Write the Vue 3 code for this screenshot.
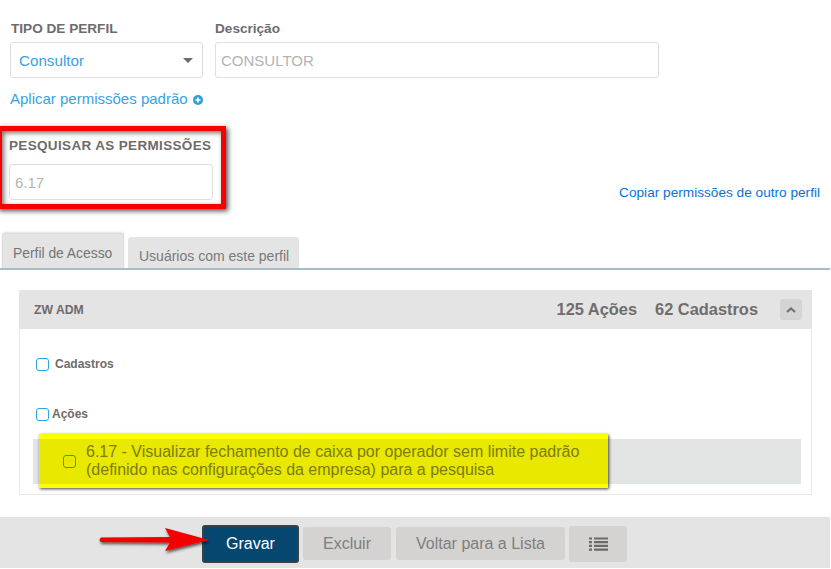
<script setup>
const footerButtons = ['Excluir', 'Voltar para a Lista']
</script>

<template>
  <div class="page">
    <section class="fields">
      <div class="field type">
        <label class="label">TIPO DE PERFIL</label>
        <div class="box select">
          <span>Consultor</span>
          <i class="caret"></i>
        </div>
      </div>
      <div class="field desc">
        <label class="label">Descrição</label>
        <div class="box placeholder">CONSULTOR</div>
      </div>
    </section>

    <a class="apply">Aplicar permissões padrão
      <svg class="plus" viewBox="0 0 10 10" width="10" height="10">
        <circle cx="5" cy="5" r="5" fill="#2f9fdc" />
        <path d="M5 2.4v5.2M2.4 5h5.2" stroke="#fff" stroke-width="1.7" />
      </svg>
    </a>

    <section class="search-row">
      <div class="search">
        <label class="label spaced">PESQUISAR AS PERMISSÕES</label>
        <div class="box placeholder small">6.17</div>
        <div class="red-mark"></div>
      </div>
      <a class="copy">Copiar permissões de outro perfil</a>
    </section>

    <nav class="tabs">
      <div class="tab active">Perfil de Acesso</div>
      <div class="tab">Usuários com este perfil</div>
    </nav>

    <section class="panel">
      <header class="panel-head">
        <span class="panel-title">ZW ADM</span>
        <span class="count first">125 Ações</span>
        <span class="count">62 Cadastros</span>
        <span class="collapse">
          <svg viewBox="0 0 10 6" width="10" height="6">
            <path d="M1 5l4-3.6L9 5" fill="none" stroke="#6f6f6f" stroke-width="2" />
          </svg>
        </span>
      </header>
      <div class="panel-body">
        <div class="check-line cad"><i class="check"></i><b>Cadastros</b></div>
        <div class="check-line acoes"><i class="check"></i><b>Ações</b></div>
        <div class="perm-row">
          <div class="highlight">
            <i class="check green"></i>
            <p>6.17 - Visualizar fechamento de caixa por operador sem limite padrão<br />(definido nas configurações da empresa) para a pesquisa</p>
          </div>
        </div>
      </div>
    </section>

    <footer class="footer">
      <button class="btn save">Gravar</button>
      <button v-for="b in footerButtons" :key="b" class="btn muted">{{ b }}</button>
      <button class="btn list" aria-label="Lista">
        <svg viewBox="0 0 19 14" width="19" height="14">
          <path d="M0 1.5h3M5 1.5h14M0 5.2h3M5 5.2h14M0 8.9h3M5 8.9h14M0 12.6h3M5 12.6h14" stroke="#6a6a6a" stroke-width="2.2" />
        </svg>
      </button>
      <svg class="arrow" viewBox="0 0 120 40" width="120" height="40">
        <defs>
          <filter id="sh" x="-10%" y="-30%" width="125%" height="170%">
            <feDropShadow dx="1" dy="2" stdDeviation="1.6" flood-color="#000" flood-opacity=".65" />
          </filter>
        </defs>
        <path d="M4 13.5 L73 13 L68 4 L112 16 L68 27 L73 18.5 L4 18 Q1 16 4 13.5Z" fill="#f40000" filter="url(#sh)" />
      </svg>
    </footer>
  </div>
</template>

<style>
html, body { margin: 0; background: #fff; }
</style>

<style scoped>
.page {
  position: relative;
  width: 831px;
  height: 569px;
  overflow: hidden;
  background: #fff;
  font-family: "Liberation Sans", Arial, sans-serif;
  color: #777;
}
.fields {
  display: flex;
  gap: 12px;
  padding: 20px 0 0 10px;
}
.field { display: flex; flex-direction: column; gap: 4px; }
.type { width: 193px; }
.desc { width: 444px; }
.desc .label { padding-left: 0; }
.label {
  height: 18px;
  padding-left: 1px;
  font-size: 13.6px;
  line-height: 18px;
  font-weight: 700;
  color: #6f6b6b;
}
.box {
  box-sizing: border-box;
  height: 36px;
  padding: 0 5px;
  border: 1px solid #dedede;
  border-radius: 3px;
  font-size: 15px;
  line-height: 35px;
  background: #fff;
}
.select {
  display: flex;
  align-items: center;
  justify-content: space-between;
  padding: 1px 9px 0 8px;
  font-size: 15.2px;
  color: #36a3e3;
}
.caret {
  width: 0;
  height: 0;
  border: 5px solid transparent;
  border-top: 5px solid #6b6b6b;
  border-bottom: 0;
}
.placeholder { color: #b3b3b3; }
.small { width: 204px; }
.apply {
  display: flex;
  align-items: center;
  gap: 5px;
  width: max-content;
  margin: 12px 0 0 10px;
  font-size: 15px;
  line-height: 18px;
  color: #36a3e3;
}
.plus { margin-top: 2px; }
.search-row {
  display: flex;
  justify-content: space-between;
  align-items: flex-end;
  height: 66px;
  margin-top: 26px;
  padding: 0 11px 0 9px;
}
.search {
  position: relative;
  display: flex;
  flex-direction: column;
  gap: 9px;
}
.spaced {
  padding: 0;
  font-size: 13.5px;
  letter-spacing: .34px;
  white-space: nowrap;
}
.red-mark {
  position: absolute;
  left: -12px;
  top: -11px;
  width: 219px;
  height: 73px;
  border: 5px solid #f70000;
  box-shadow: 2px 2px 5px rgba(0,0,0,.7), inset 2px 2px 5px rgba(0,0,0,.55);
}
.copy {
  margin-bottom: -2px;
  font-size: 13.65px;
  line-height: 18px;
  color: #0b72cf;
}
.tabs {
  display: flex;
  align-items: flex-end;
  gap: 4px;
  height: 35px;
  margin: 33px 1px 0 0;
  padding-left: 2px;
  border-bottom: 2px solid #a9bbca;
}
.tab {
  box-sizing: border-box;
  height: 31px;
  padding: 11px 10px 0 11px;
  background: #e4e4e4;
  border-radius: 3px 3px 0 0;
  font-size: 14px;
  line-height: 16px;
  color: #7a7a7a;
}
.tab.active {
  width: 122px;
  height: 35px;
  padding: 11px 0 0 10px;
  border: 1px solid #ddd;
  border-bottom: 0;
  box-shadow: 0 -1px 2px rgba(0,0,0,.12);
  font-size: 13.85px;
  color: #757575;
}
.panel {
  margin: 20px 19px 0 19px;
  border: 1px solid #e8e8e8;
  border-top: 0;
  height: 205px;
  box-sizing: border-box;
}
.panel-head {
  display: flex;
  align-items: center;
  height: 39px;
  margin: 0 -1px;
  padding: 0 10px 0 15px;
  background: #e4e4e4;
}
.panel-title {
  margin-right: auto;
  font-size: 12.2px;
  font-weight: 700;
  color: #6f6b6b;
}
.count {
  margin-left: 18px;
  font-size: 16.4px;
  font-weight: 700;
  color: #706d6d;
}
.collapse {
  display: flex;
  align-items: center;
  justify-content: center;
  width: 22px;
  height: 21px;
  margin-left: 22px;
  background: #d5d4d4;
  border-radius: 3px;
}
.panel-body { position: relative; }
.check-line {
  display: flex;
  align-items: center;
  height: 14px;
  padding-left: 16px;
  font-size: 12px;
  color: #6f6b6b;
}
.check-line b { font-weight: 700; }
.cad { gap: 6px; margin-top: 28px; }
.acoes { gap: 3px; margin-top: 36px; }
.check {
  box-sizing: border-box;
  flex: none;
  width: 13px;
  height: 13px;
  border: 1.5px solid #2aa5e5;
  border-radius: 3px;
}
.perm-row {
  position: relative;
  height: 45px;
  margin: 18px 10px 0 13px;
  background: #e3e4e4;
}
.highlight {
  position: absolute;
  left: 6px;
  top: -5px;
  box-sizing: border-box;
  display: flex;
  align-items: center;
  gap: 10px;
  width: 569px;
  height: 54px;
  padding-left: 24px;
  background: #e8e800;
  border-top: 5px solid #ffff00;
  border-bottom: 4px solid #ffff00;
  box-shadow: 1px 1px 3px rgba(0,0,0,.75);
}
.highlight p {
  margin: -2px 0 0;
  font-size: 16px;
  line-height: 18px;
  color: #7d7d10;
}
.check.green { border-color: #3ea81e; }
.footer {
  position: absolute;
  left: 0;
  right: 1px;
  top: 517px;
  display: flex;
  align-items: center;
  gap: 4px;
  height: 51px;
  padding: 2px 0 0 202px;
  background: #e4e4e4;
  box-sizing: border-box;
}
.btn {
  box-sizing: border-box;
  height: 33px;
  padding: 0;
  border: 0;
  border-radius: 3px;
  background: #d4d3d2;
  font-family: inherit;
  font-size: 16px;
  color: #7e7e7e;
}
.save {
  width: 97px;
  height: 38px;
  border: 2px solid #3a4147;
  background: #05476f;
  color: #fff;
}
.muted:nth-of-type(2) { width: 88px; margin-right: 1px; }
.muted:nth-of-type(3) { width: 169px; }
.list {
  display: flex;
  align-items: center;
  justify-content: center;
  width: 58px;
  height: 36px;
}
.arrow {
  position: absolute;
  left: 97px;
  top: 7px;
}
</style>
